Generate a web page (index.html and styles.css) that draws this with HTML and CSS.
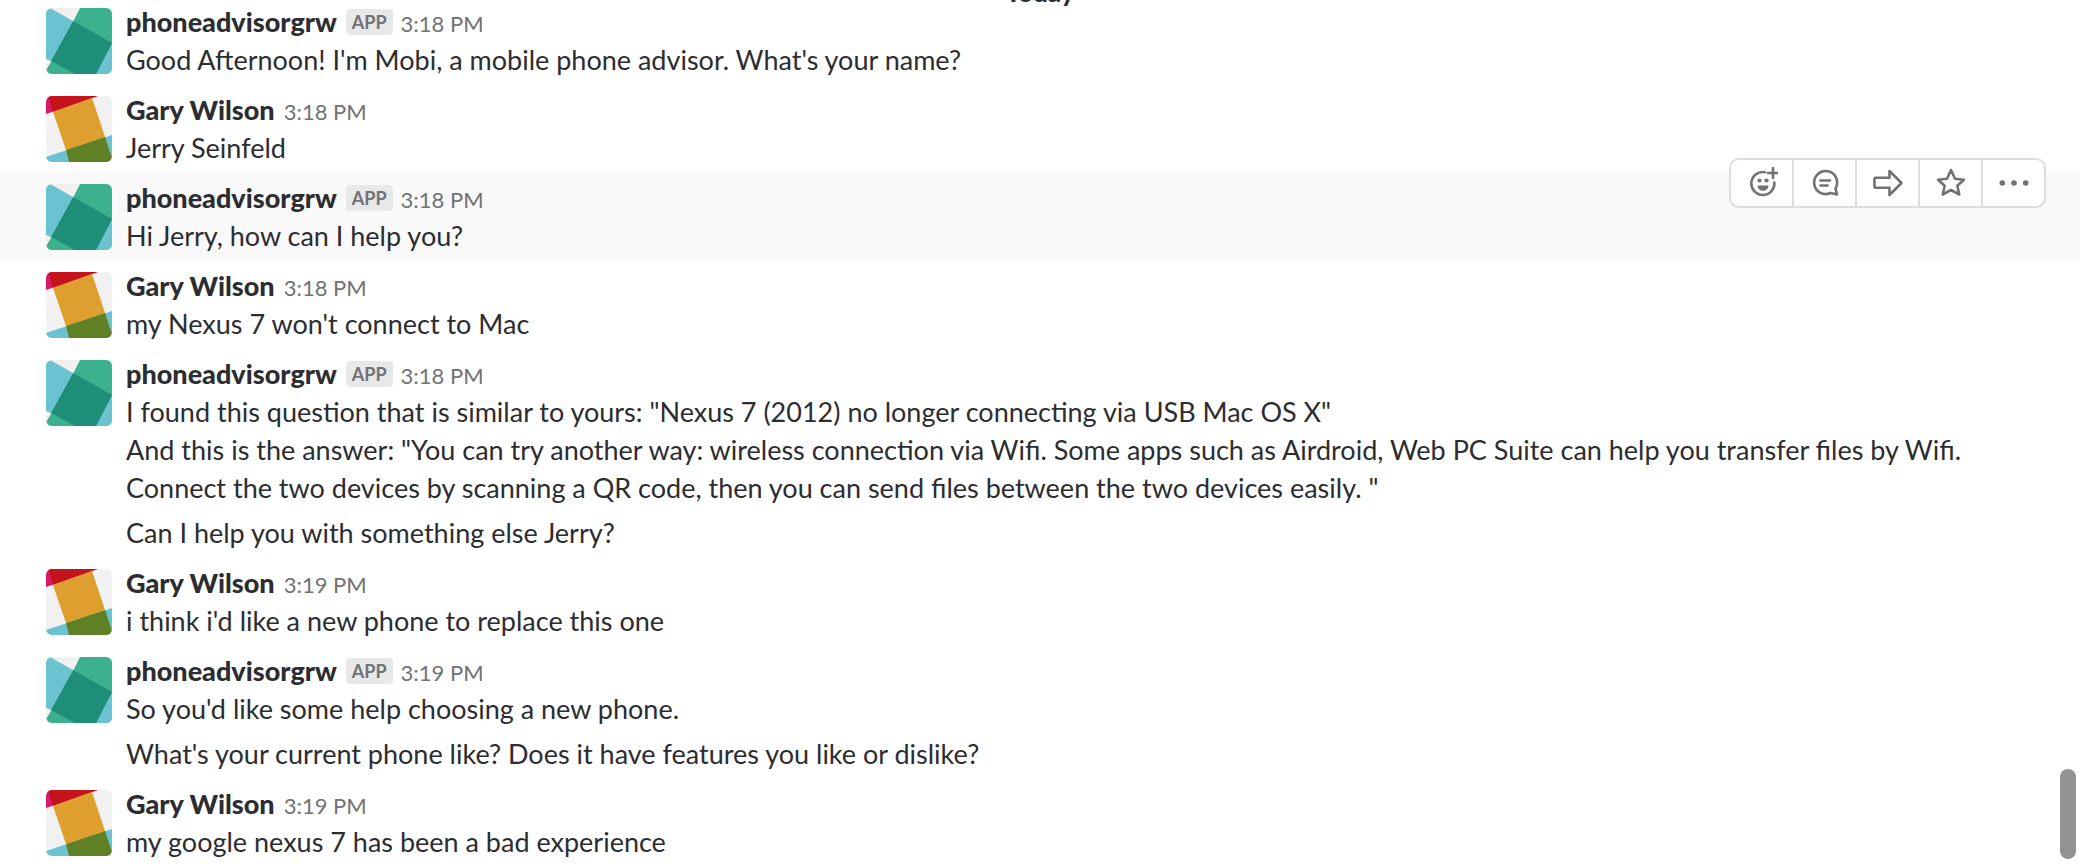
FILE: index.html
```html
<!DOCTYPE html>
<html lang="en">
<head>
<meta charset="utf-8">
<title>phoneadvisorgrw</title>
<link rel="stylesheet" href="styles.css">
</head>
<body>
<svg class="defs" aria-hidden="true">
  <symbol id="bot" viewBox="0 0 66 66">
    <path fill="#f0f0f0" d="M0 0h66v66H0z"/>
    <path fill="#3bb18e" d="M34 0H66V66H0V62L28 12z"/>
    <path fill="#6bc2d1" d="M0 0H4L27 13L5 53L0 51z"/>
    <path fill="#f0f0f0" d="M0 51L5 54L0 62z"/>
    <path fill="#6bc2d1" d="M66 35V66H50z"/>
    <path fill="#1f8e78" d="M27 13L66 35L50 66H29L5 53z"/>
  </symbol>
  <symbol id="gary" viewBox="0 0 66 66">
    <path fill="#f1f1f1" d="M0 0h66v66H0z"/>
    <path fill="#d9186b" d="M0 0H52L6 16L0 18z"/>
    <path fill="#c5131b" d="M2 0H51L46 2L7 16z"/>
    <path fill="#6bc2d1" d="M0 61L66 39V66H0z"/>
    <path fill="#de9f2f" d="M7 16L46 2L59 41L20 54z"/>
    <path fill="#5f8024" d="M20 54L59 41L66 62V66H23z"/>
  </symbol>
</svg>
<main class="log">
  <h2 class="day">Today</h2>

  <article class="msg">
    <svg class="avatar" role="img" aria-label="phoneadvisorgrw"><use href="#bot"/></svg>
    <div class="body">
      <header class="head"><b class="name">phoneadvisorgrw</b><span class="badge">APP</span><time class="time">3:18 PM</time></header>
      <p class="text">Good Afternoon! I'm Mobi, a mobile phone advisor. What's your name?</p>
    </div>
  </article>

  <article class="msg">
    <svg class="avatar" role="img" aria-label="Gary Wilson"><use href="#gary"/></svg>
    <div class="body">
      <header class="head"><b class="name">Gary Wilson</b><time class="time">3:18 PM</time></header>
      <p class="text">Jerry Seinfeld</p>
    </div>
  </article>

  <article class="msg active">
    <svg class="avatar" role="img" aria-label="phoneadvisorgrw"><use href="#bot"/></svg>
    <div class="body">
      <header class="head"><b class="name">phoneadvisorgrw</b><span class="badge">APP</span><time class="time">3:18 PM</time></header>
      <p class="text">Hi Jerry, how can I help you?</p>
    </div>
    <div class="actions">
      <button class="action" type="button" aria-label="Add reaction">
        <svg class="icon" viewBox="-2 0 32 32"><path d="M17 5.200A11.500 11.500 0 1 0 26.300 15.500M25 1v10M20 6h10"/><circle class="solid" cx="11.500" cy="13.500" r="2.100"/><circle class="solid" cx="18.500" cy="13.500" r="2.100"/><path class="solid" d="M9.500 18.500H20.500C20.500 25.500 9.500 25.500 9.500 18.500z"/></svg>
      </button>
      <button class="action" type="button" aria-label="Start a thread">
        <svg class="icon" viewBox="0 0 32 32"><path d="M26.500 21.500A11.500 11.500 0 1 0 21.500 26L28 27.500z"/><path d="M11.500 13.500h9.500M11.500 18.500h7"/></svg>
      </button>
      <button class="action" type="button" aria-label="Share message">
        <svg class="icon" viewBox="0 0 32 32"><path d="M3.500 10.800H17.500V4L29.500 16L17.500 28V20.800H3.500Q2.500 20.800 2.500 19.800V11.800Q2.500 10.800 3.500 10.800z"/></svg>
      </button>
      <button class="action" type="button" aria-label="Star message">
        <svg class="icon" viewBox="0 0 32 32"><path d="M16 3L20 11.800L29 12.800L22.300 18.800L24.300 27.500L16 23L7.700 27.500L9.700 18.800L3 12.800L12 11.800z"/></svg>
      </button>
      <button class="action" type="button" aria-label="More actions">
        <svg class="icon" viewBox="0 0 32 32"><circle class="solid" cx="4.300" cy="16" r="2.800"/><circle class="solid" cx="16" cy="16" r="2.800"/><circle class="solid" cx="27.700" cy="16" r="2.800"/></svg>
      </button>
    </div>
  </article>

  <article class="msg">
    <svg class="avatar" role="img" aria-label="Gary Wilson"><use href="#gary"/></svg>
    <div class="body">
      <header class="head"><b class="name">Gary Wilson</b><time class="time">3:18 PM</time></header>
      <p class="text">my Nexus 7 won't connect to Mac</p>
    </div>
  </article>

  <article class="msg">
    <svg class="avatar" role="img" aria-label="phoneadvisorgrw"><use href="#bot"/></svg>
    <div class="body">
      <header class="head"><b class="name">phoneadvisorgrw</b><span class="badge">APP</span><time class="time">3:18 PM</time></header>
      <p class="text">I found this question that is similar to yours: "Nexus 7 (2012) no longer connecting via USB Mac OS X"<br>And this is the answer: "You can try another way: wireless connection via Wifi. Some apps such as Airdroid, Web PC Suite can help you transfer files by Wifi. Connect the two devices by scanning a QR code, then you can send files between the two devices easily. "</p>
      <p class="text more">Can I help you with something else Jerry?</p>
    </div>
  </article>

  <article class="msg">
    <svg class="avatar" role="img" aria-label="Gary Wilson"><use href="#gary"/></svg>
    <div class="body">
      <header class="head"><b class="name">Gary Wilson</b><time class="time">3:19 PM</time></header>
      <p class="text">i think i'd like a new phone to replace this one</p>
    </div>
  </article>

  <article class="msg">
    <svg class="avatar" role="img" aria-label="phoneadvisorgrw"><use href="#bot"/></svg>
    <div class="body">
      <header class="head"><b class="name">phoneadvisorgrw</b><span class="badge">APP</span><time class="time">3:19 PM</time></header>
      <p class="text">So you'd like some help choosing a new phone.</p>
      <p class="text more">What's your current phone like? Does it have features you like or dislike?</p>
    </div>
  </article>

  <article class="msg">
    <svg class="avatar" role="img" aria-label="Gary Wilson"><use href="#gary"/></svg>
    <div class="body">
      <header class="head"><b class="name">Gary Wilson</b><time class="time">3:19 PM</time></header>
      <p class="text">my google nexus 7 has been a bad experience</p>
    </div>
  </article>
  <div class="thumb"></div>
</main>
</body>
</html>
```

FILE: styles.css
```css
* {
  box-sizing: border-box;
}

body {
  margin: 0;
  background: #fff;
  color: #2c2d30;
  font: 400 27px/38px Lato, sans-serif;
}

.defs {
  display: none;
}

.log {
  position: relative;
  height: 100vh;
  overflow: hidden;
  display: flex;
  flex-direction: column;
}

.day {
  margin: -23px 0 -11px;
  flex: none;
  font-size: 26px;
  line-height: 30px;
  font-weight: 900;
  text-align: center;
}

.msg {
  position: relative;
  flex: none;
  display: flex;
  gap: 14px;
  padding: 8px 80px 5px 46px;
}

.active {
  background: #f9f9f9;
}

.avatar {
  flex: none;
  width: 66px;
  height: 66px;
  margin-top: 4px;
  border-radius: 6px;
}

.body {
  flex: 1;
  min-width: 0;
}

.head {
  display: flex;
  align-items: baseline;
  height: 37px;
  line-height: 36px;
}

.name {
  font-weight: 900;
}

.badge {
  align-self: flex-start;
  margin: 5px 0 0 9px;
  padding: 0 6px;
  border-radius: 4px;
  background: #e8e8e8;
  color: #717274;
  font-size: 18px;
  line-height: 26px;
  font-weight: 700;
}

.time {
  margin-left: 9px;
  color: #717274;
  font-size: 22px;
}

.badge + .time {
  margin-left: 8px;
}

.text {
  margin: 0;
}

.more {
  margin-top: 7px;
}

.actions {
  position: absolute;
  top: -14px;
  right: 34px;
  display: flex;
  border: 2px solid #ddd;
  border-radius: 10px;
  background: #fff;
}

.action {
  display: flex;
  align-items: center;
  justify-content: center;
  width: 61px;
  height: 46px;
  padding: 0;
  border: 0;
  background: none;
  color: #717274;
}

.action + .action {
  width: 63px;
  border-left: 2px solid #ddd;
}

.icon {
  width: 32px;
  height: 32px;
  fill: none;
  stroke: currentColor;
  stroke-width: 2.6;
  stroke-linecap: round;
  stroke-linejoin: round;
}

.icon .solid {
  fill: currentColor;
  stroke: none;
}

.thumb {
  position: absolute;
  right: 4px;
  bottom: 7px;
  width: 16px;
  height: 90px;
  border-radius: 8px;
  background: #929294;
}
```
